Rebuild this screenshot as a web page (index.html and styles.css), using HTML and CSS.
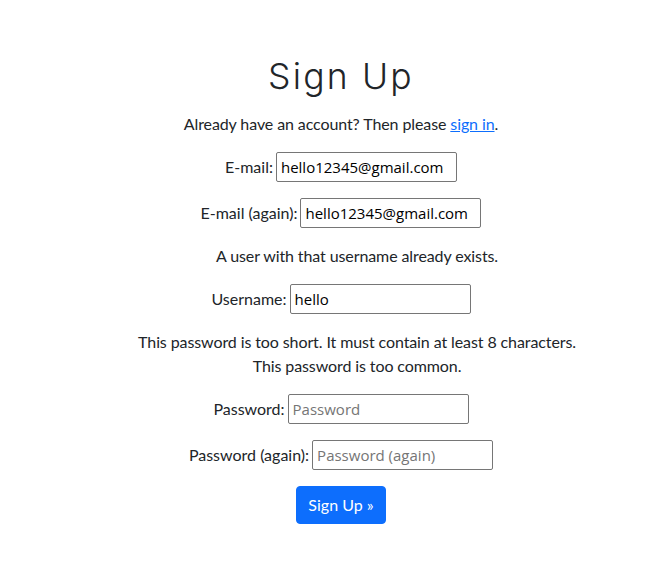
FILE: index.html
```html
<!DOCTYPE html>
<html lang="en">
<head>
<meta charset="utf-8">
<title>Sign Up</title>
<link rel="stylesheet" href="styles.css">
</head>
<body>
<main class="page">
  <h1 class="title">Sign Up</h1>
  <p class="line">Already have an account? Then please <a href="#" class="link">sign in</a>.</p>
  <form class="form">
    <p class="row"><label for="e1">E-mail:</label><input id="e1" class="field" type="text" value="hello12345@gmail.com"></p>
    <p class="row"><label for="e2">E-mail (again):</label><input id="e2" class="field" type="text" value="hello12345@gmail.com"></p>
    <ul class="errors"><li>A user with that username already exists.</li></ul>
    <p class="row"><label for="u">Username:</label><input id="u" class="field" type="text" value="hello"></p>
    <ul class="errors"><li>This password is too short. It must contain at least 8 characters.</li><li>This password is too common.</li></ul>
    <p class="row"><label for="p1">Password:</label><input id="p1" class="field" type="password" placeholder="Password"></p>
    <p class="row"><label for="p2">Password (again):</label><input id="p2" class="field" type="password" placeholder="Password (again)"></p>
    <div class="actions"><button type="button" class="btn">Sign Up &raquo;</button></div>
  </form>
</main>
</body>
</html>
```
FILE: styles.css
```css
html, body {
  margin: 0;
  padding: 0;
  background: #fff;
}
body {
  font-family: Lato, "Liberation Sans", sans-serif;
  font-size: 16px;
  line-height: 24px;
  color: #212529;
}
.page {
  padding: 57px 0 0 22px;
  text-align: center;
}
.title {
  margin: 0 0 15px;
  font-family: Inter, "Open Sans", sans-serif;
  font-weight: 300;
  font-size: 35.5px;
  line-height: 40px;
  letter-spacing: 2.2px;
  color: #212529;
}
.line {
  margin: 0 0 16px;
  letter-spacing: -0.1px;
}
.link {
  color: #0d6efd;
  text-decoration: underline;
}
.form {
  margin: 0;
}
.errors {
  margin: 0 0 16px;
  padding: 0 0 0 32px;
  list-style: none;
  letter-spacing: -0.1px;
}
.row {
  margin: 0 0 16px;
  height: 30px;
  display: flex;
  justify-content: center;
  align-items: center;
  gap: 3px;
}
.field {
  box-sizing: border-box;
  width: 181px;
  height: 30px;
  margin: 0;
  padding: 1px 4px;
  border: 1px solid #767676;
  border-radius: 2px;
  font-family: "Open Sans", "Liberation Sans", sans-serif;
  font-size: 15px;
  color: #000;
  background: #fff;
}
.field::placeholder {
  color: #757575;
}
.actions {
  display: flex;
  justify-content: center;
}
.btn {
  box-sizing: border-box;
  height: 38px;
  padding: 6px 11px;
  border: 1px solid #0d6efd;
  border-radius: 4px;
  background: #0d6efd;
  color: #fff;
  font-family: Lato, "Liberation Sans", sans-serif;
  font-size: 16px;
  line-height: 24px;
  cursor: pointer;
}
```
